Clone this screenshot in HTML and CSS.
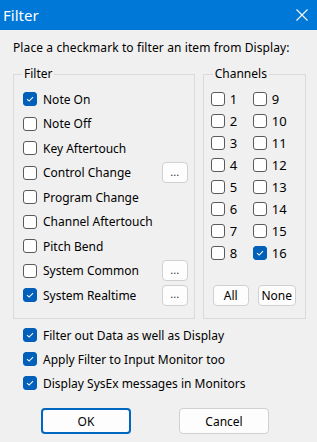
FILE: index.html
```html
<!DOCTYPE html>
<html lang="en">
<head>
    <meta charset="UTF-8">
    <title>Filter</title>
    <link rel="stylesheet" href="styles.css">
</head>
<body>
    <div class="dialog">
        <header class="titlebar">
            <span class="title">Filter</span>
            <svg class="close" width="12" height="12" viewBox="0 0 12 12">
                <path d="M0.5 0.5 L11.5 11.5 M11.5 0.5 L0.5 11.5" stroke="#fff" stroke-width="1.1" fill="none"/>
            </svg>
        </header>

        <div class="content">
            <p class="intro">Place a checkmark to filter an item from Display:</p>

            <div class="groups">
                <fieldset class="group filter-group">
                    <legend>Filter</legend>
                    <label class="row"><span class="box checked"><svg viewBox="0 0 14 14"><path d="M3.5 7.2 L6 9.5 L10.5 4.8"/></svg></span>Note On</label>
                    <label class="row"><span class="box"></span>Note Off</label>
                    <label class="row"><span class="box"></span>Key Aftertouch</label>
                    <label class="row"><span class="box"></span>Control Change<button class="more">...</button></label>
                    <label class="row"><span class="box"></span>Program Change</label>
                    <label class="row"><span class="box"></span>Channel Aftertouch</label>
                    <label class="row"><span class="box"></span>Pitch Bend</label>
                    <label class="row"><span class="box"></span>System Common<button class="more">...</button></label>
                    <label class="row"><span class="box checked"><svg viewBox="0 0 14 14"><path d="M3.5 7.2 L6 9.5 L10.5 4.8"/></svg></span>System Realtime<button class="more">...</button></label>
                </fieldset>

                <fieldset class="group channel-group">
                    <legend>Channels</legend>
                    <div class="channels">
                        <label class="ch"><span class="box"></span>1</label>
                        <label class="ch"><span class="box"></span>9</label>
                        <label class="ch"><span class="box"></span>2</label>
                        <label class="ch"><span class="box"></span>10</label>
                        <label class="ch"><span class="box"></span>3</label>
                        <label class="ch"><span class="box"></span>11</label>
                        <label class="ch"><span class="box"></span>4</label>
                        <label class="ch"><span class="box"></span>12</label>
                        <label class="ch"><span class="box"></span>5</label>
                        <label class="ch"><span class="box"></span>13</label>
                        <label class="ch"><span class="box"></span>6</label>
                        <label class="ch"><span class="box"></span>14</label>
                        <label class="ch"><span class="box"></span>7</label>
                        <label class="ch"><span class="box"></span>15</label>
                        <label class="ch"><span class="box"></span>8</label>
                        <label class="ch"><span class="box checked"><svg viewBox="0 0 14 14"><path d="M3.5 7.2 L6 9.5 L10.5 4.8"/></svg></span>16</label>
                    </div>
                    <div class="ch-buttons">
                        <button class="small all">All</button>
                        <button class="small none">None</button>
                    </div>
                </fieldset>
            </div>

            <div class="options">
                <label class="row opt"><span class="box checked"><svg viewBox="0 0 14 14"><path d="M3.5 7.2 L6 9.5 L10.5 4.8"/></svg></span>Filter out Data as well as Display</label>
                <label class="row opt"><span class="box checked"><svg viewBox="0 0 14 14"><path d="M3.5 7.2 L6 9.5 L10.5 4.8"/></svg></span>Apply Filter to Input Monitor too</label>
                <label class="row opt"><span class="box checked"><svg viewBox="0 0 14 14"><path d="M3.5 7.2 L6 9.5 L10.5 4.8"/></svg></span>Display SysEx messages in Monitors</label>
            </div>

            <div class="actions">
                <button class="btn default">OK</button>
                <button class="btn">Cancel</button>
            </div>
        </div>
    </div>
</body>
</html>
```

FILE: styles.css
```css
body {
    margin: 0;
    font-family: "Noto Sans", "Liberation Sans", sans-serif;
    font-size: 12px;
    color: #000;
    background-color: #f0f0f0;
}
.dialog {
    width: 317px;
    height: 442px;
    background-color: #f0f0f0;
}
.titlebar {
    height: 30px;
    background-color: #0078d7;
    color: #fff;
    display: flex;
    align-items: center;
    justify-content: space-between;
    padding: 0 8px 0 3px;
    box-sizing: border-box;
}
.title {
    font-size: 15px;
}
.close {
    margin-right: 1px;
}
.content {
    padding: 0 11px 0 13px;
}
.intro {
    margin: 0;
    padding-top: 10px;
    height: 25px;
    line-height: 16px;
    letter-spacing: 0.1px;
}
.groups {
    display: flex;
    gap: 8px;
    margin-top: 2px;
}
.group {
    margin: 0;
    border: 1px solid #dadada;
    padding: 0;
    height: 244px;
}
.group legend {
    padding: 0 2px;
    line-height: 14px;
}
.filter-group {
    width: 172px;
    padding: 6px 0 0 9px;
}
.filter-group legend {
    margin-left: -1px;
}
.channel-group {
    width: 95px;
    padding: 6px 0 0 7px;
}
.channel-group legend {
    margin-left: 2px;
}
.row {
    display: flex;
    align-items: center;
    height: 24.5px;
}
.box {
    width: 12px;
    height: 12px;
    border: 1px solid #5a5a5a;
    border-radius: 3px;
    background-color: #fff;
    margin-right: 6px;
    flex-shrink: 0;
    display: flex;
}
.box.checked {
    background-color: #005fb8;
    border-color: #005fb8;
}
.box svg {
    width: 12px;
    height: 12px;
}
.box svg path {
    fill: none;
    stroke: #fff;
    stroke-width: 1.2;
}
.more {
    margin-left: auto;
    margin-right: 6px;
    width: 26px;
    height: 21px;
    font-size: 11px;
    font-family: inherit;
    background-color: #fdfdfd;
    border: 1px solid #d0d0d0;
    border-radius: 4px;
    padding: 0 0 3px;
    color: #333;
}
.channels {
    display: grid;
    grid-template-columns: 42px 42px;
    grid-auto-rows: 22px;
    margin-top: 1px;
}
.ch {
    display: flex;
    align-items: center;
    font-size: 13px;
}
.ch .box {
    margin-right: 5px;
}
.ch-buttons {
    display: flex;
    gap: 9px;
    margin-top: 21px;
    padding-left: 2px;
}
.small {
    height: 21px;
    font-family: inherit;
    font-size: 12px;
    background-color: #fdfdfd;
    border: 1px solid #d0d0d0;
    border-radius: 4px;
    padding: 0;
}
.all {
    width: 36px;
}
.none {
    width: 38px;
}
.options {
    padding: 4px 0 0 10px;
}
.opt {
    height: 24px;
}
.actions {
    display: flex;
    gap: 48px;
    padding: 13px 0 0 28px;
}
.btn {
    width: 90px;
    height: 26px;
    font-family: inherit;
    font-size: 12px;
    background-color: #fdfdfd;
    border: 1px solid #d0d0d0;
    border-radius: 4px;
}
.btn.default {
    border: 2px solid #0067c0;
}
```
